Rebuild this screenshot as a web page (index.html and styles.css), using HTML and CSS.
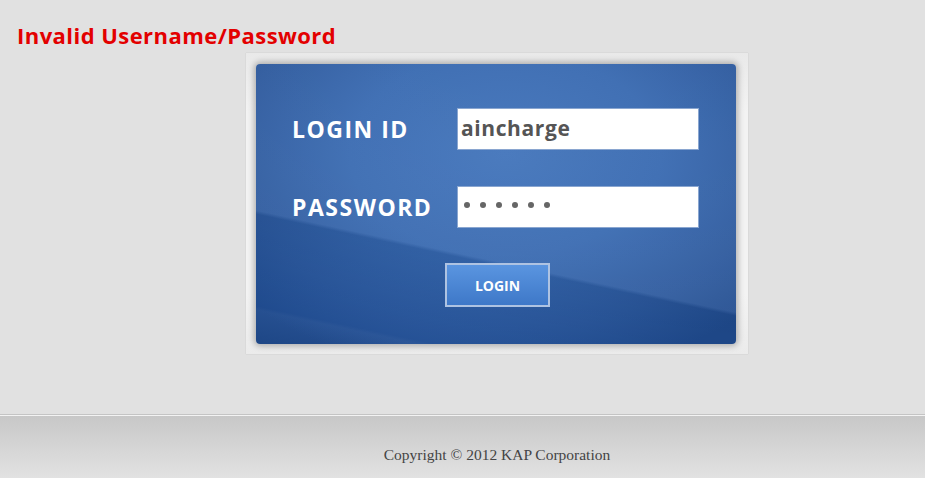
FILE: index.html
```html
<!DOCTYPE html>
<html lang="en">
<head>
<meta charset="utf-8">
<title>Login</title>
<link rel="stylesheet" href="styles.css">
</head>
<body>
<main class="page">
  <p class="error">Invalid Username/Password</p>
  <div class="frame">
    <form class="panel">
      <div class="row">
        <label class="label">LOGIN ID</label>
        <div class="field">aincharge</div>
      </div>
      <div class="row">
        <label class="label">PASSWORD</label>
        <div class="field field-pass" aria-label="password">
          <span class="dot"></span><span class="dot"></span><span class="dot"></span><span class="dot"></span><span class="dot"></span><span class="dot"></span>
        </div>
      </div>
      <div class="actions">
        <button type="button" class="btn">LOGIN</button>
      </div>
    </form>
  </div>
</main>
<footer class="footer">
  <p class="copy">Copyright © 2012 KAP Corporation</p>
</footer>
</body>
</html>
```
FILE: styles.css
```css
* { box-sizing: border-box; }
html, body { margin: 0; padding: 0; }
body {
  background: #e1e1e1;
  width: 925px;
  height: 478px;
  overflow: hidden;
}
.page {
  height: 414px;
  padding-top: 22px;
}
.error {
  margin: 0;
  padding-left: 17px;
  font-family: "Open Sans", "DejaVu Sans", sans-serif;
  font-weight: 700;
  font-size: 22px;
  line-height: 26px;
  letter-spacing: 0.45px;
  color: #e30000;
}
.frame {
  margin: 5px 0 0 246px;
  width: 502px;
  height: 301px;
  padding: 11px 11px 10px 10px;
  background: linear-gradient(#e9e9e9, #f3f3f3 20%, #f3f3f3 80%, #ebebeb);
  box-shadow: 0 0 1px rgba(0,0,0,0.18);
}
.panel {
  width: 480px;
  height: 280px;
  margin: 0;
  padding: 44px 0 0 0;
  border-radius: 4px;
  background:
    linear-gradient(192deg, rgba(255,255,255,0.05) 0%, rgba(255,255,255,0.07) 65%, rgba(0,0,0,0.06) 66%, rgba(0,0,0,0) 90%, rgba(255,255,255,0.03) 91%, rgba(0,0,0,0.05) 100%),
    radial-gradient(ellipse 72% 80% at 52% 32%, #3f72ba 0%, #3668b0 45%, #2a579c 78%, #1f4a8d 100%);
  box-shadow: 0 0 6px 2px rgba(0,0,0,0.28);
  display: flex;
  flex-direction: column;
}
.row {
  display: flex;
  align-items: center;
  height: 42px;
  padding-left: 36px;
}
.row + .row { margin-top: 36px; }
.label {
  width: 165px;
  font-family: "Open Sans", "DejaVu Sans", sans-serif;
  font-weight: 700;
  font-size: 23px;
  color: #ffffff;
  letter-spacing: 1.5px;
}
.field {
  width: 242px;
  height: 42px;
  background: #ffffff;
  border: 1px solid #8aa6d0;
  padding: 0 0 2px 3px;
  display: flex;
  align-items: center;
  font-family: "Open Sans", "DejaVu Sans", sans-serif;
  font-weight: 700;
  font-size: 21px;
  letter-spacing: 0.6px;
  color: #555555;
}
.field-pass {
  gap: 10px;
  padding-left: 6px;
  padding-bottom: 4px;
}
.dot {
  width: 6px;
  height: 6px;
  border-radius: 50%;
  background: #666666;
}
.actions {
  margin-top: 35px;
  display: flex;
  justify-content: center;
  padding-left: 3px;
}
.btn {
  width: 105px;
  height: 44px;
  border: 2px solid #aec3e2;
  border-radius: 0;
  background: linear-gradient(#5a95e0, #3e78c8);
  color: #ffffff;
  font-family: "Open Sans", "DejaVu Sans", sans-serif;
  font-weight: 700;
  font-size: 14px;
  padding: 0;
}
.footer {
  height: 64px;
  border-top: 1px solid #c4c4c4;
  box-shadow: inset 0 1px 0 #f3f3f3;
  background: linear-gradient(#c7c7c7, #dadada 70%, #e2e2e2);
  padding: 31px 0 0 69px;
  text-align: center;
}
.copy {
  margin: 0;
  font-family: "Liberation Serif", "Times New Roman", serif;
  font-size: 15.5px;
  line-height: 18px;
  color: #444444;
}
```
